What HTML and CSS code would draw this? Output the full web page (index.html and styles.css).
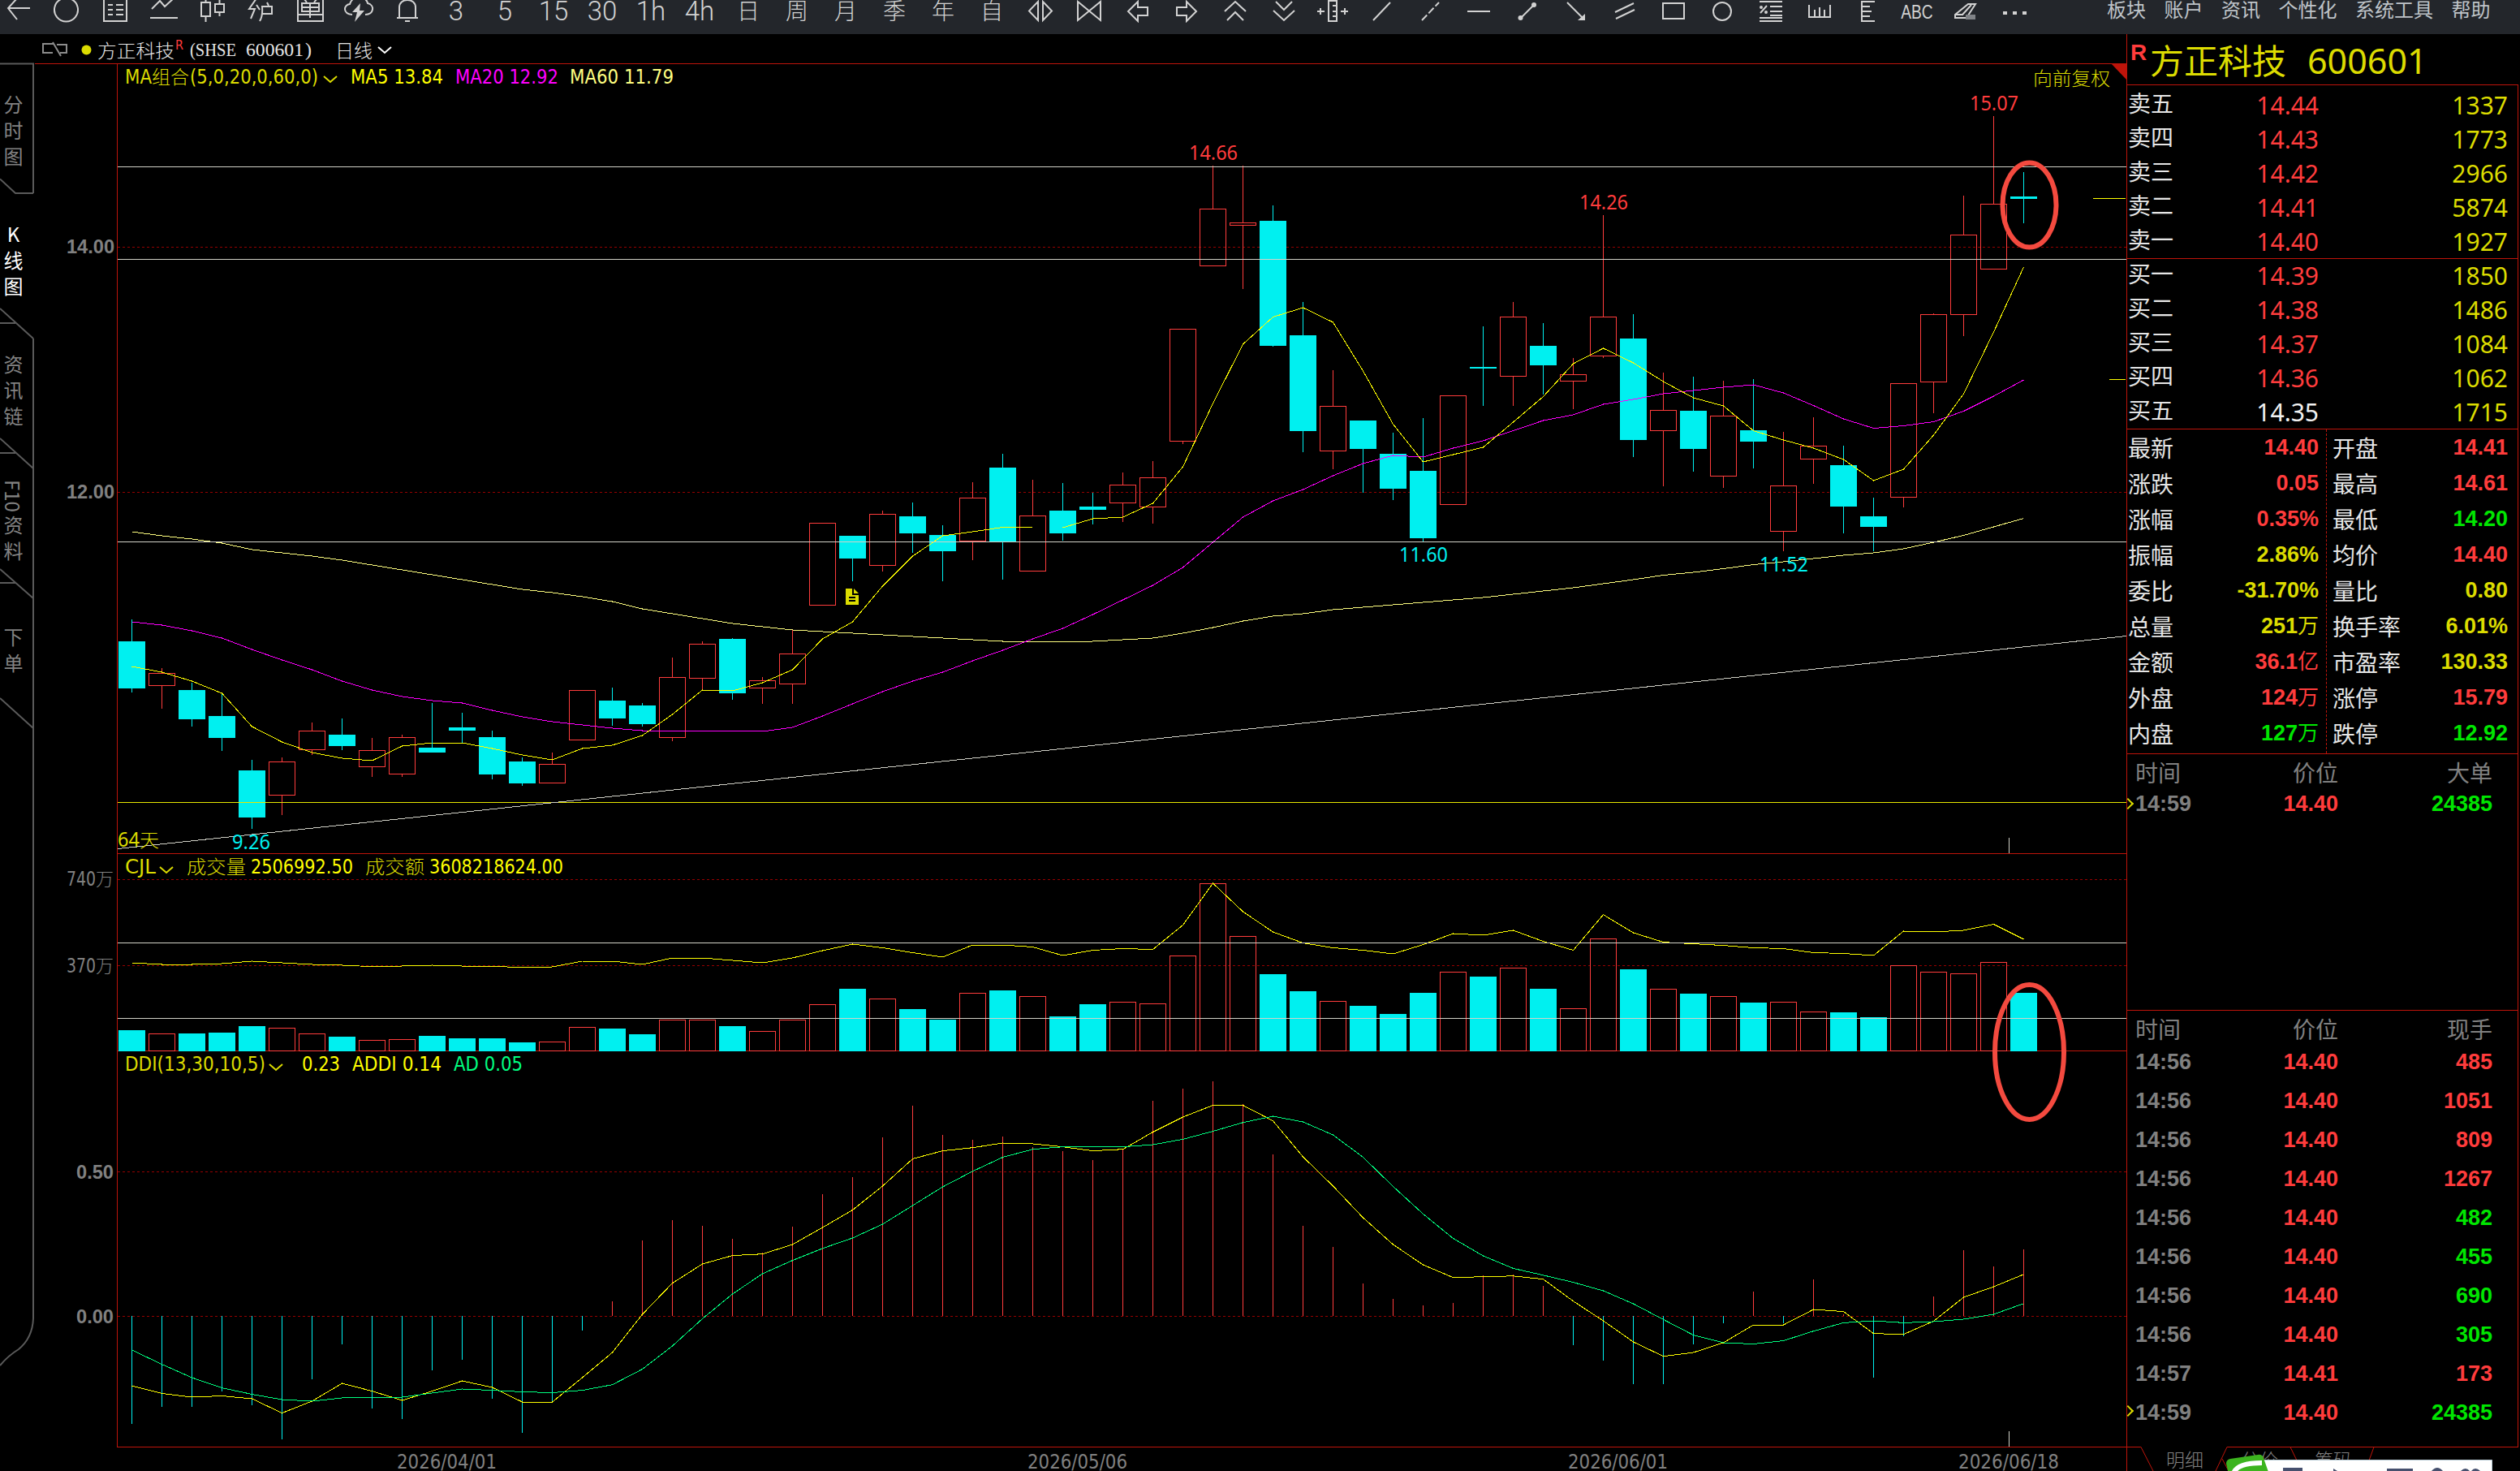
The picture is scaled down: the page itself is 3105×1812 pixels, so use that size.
FILE: index.html
```html
<!DOCTYPE html>
<html lang="zh-CN">
<head>
    <meta charset="UTF-8">
    <title>方正科技 600601</title>
    <link rel="stylesheet" href="styles.css">
</head>
<body>
    <header class="topbar">
        <div class="tools">
            <svg viewBox="-30 0 60 28"><path d="M15 10H-12M-1 -2L-12 10L-1 24"/></svg>
            <svg viewBox="-30 0 60 28"><path d="M6 -1A14.5 14.5 0 1 1 -7 -1"/></svg>
            <svg viewBox="-30 0 60 28"><path d="M-14 -2V26H14V-2M-9 6H-3M1 6H10M-9 12H-3M1 12H10M-9 18H-3M1 18H10"/></svg>
            <svg viewBox="-30 0 60 28"><path d="M-15 11L-5 1L1 8L13 -3M-17 22H17"/></svg>
            <svg viewBox="-30 0 60 28"><path d="M-14 3H-3V20H-14ZM-8.500 -2V3M-8.500 20V27M3 5H14V15H3ZM8.500 -1V5M8.500 15V20"/></svg>
            <svg viewBox="-30 0 60 28"><path d="M-6 -2L-15 11H-8L-13 23M-6 6L-2 12M-2 26Q2 20 1 8H13V17H1M7 3L9 7"/></svg>
            <svg viewBox="-30 0 60 28"><path d="M-15 -2V26H16V-2M-10 4H11V14H-10ZM-10 9H11M0 4V22M-15 18H16M-7 -1L-4 3M8 -1L5 3"/></svg>
            <svg viewBox="-30 0 60 28"><path d="M-8 18C-20 17 -19 6 -11 5C-8 -6 9 -6 11 4C20 6 19 18 8 18"/><path class="solid" d="M2 4L-8 15H-2L-5 27L7 13H1Z"/></svg>
            <svg viewBox="-30 0 60 28"><path d="M-13 22H13M-10 22V9C-10 -3 10 -3 10 9V22M-3 26H3"/></svg>
            <span>3</span><span>5</span><span>15</span><span>30</span><span>1h</span><span>4h</span>
            <span class="han">日</span><span class="han">周</span><span class="han">月</span><span class="han">季</span><span class="han">年</span><span class="han">自</span>
            <svg viewBox="-30 0 60 28"><path d="M-3 2V25L-14 13.500ZM3 2V25L14 13.500Z"/></svg>
            <svg viewBox="-30 0 60 28"><path d="M-14 2V25L0 13.500ZM14 2V25L0 13.500Z"/></svg>
            <svg viewBox="-30 0 60 28"><path d="M-12 14L0 2V9H12V19H0V26Z"/></svg>
            <svg viewBox="-30 0 60 28"><path d="M12 14L0 2V9H-12V19H0V26Z"/></svg>
            <svg viewBox="-30 0 60 28"><path d="M-13 14L0 2L13 14M-10 25L0 15L10 25"/></svg>
            <svg viewBox="-30 0 60 28"><path d="M-13 13L0 25L13 13M-10 2L0 12L10 2"/></svg>
            <svg viewBox="-30 0 60 28"><path d="M-5 1H5V26H-5ZM0 7H5M0 14H5M0 20H5M-19 14H-10M10 14H19M-15 10V18M15 10V18"/></svg>
            <svg viewBox="-30 0 60 28"><path d="M-10 25L11 3"/></svg>
            <svg viewBox="-30 0 60 28"><path stroke-dasharray="9 3" d="M-10 25L11 3"/></svg>
            <svg viewBox="-30 0 60 28"><path d="M-14 14H14"/></svg>
            <svg viewBox="-30 0 60 28"><path d="M-9 23L9 5"/><circle class="solid" cx="-8.500" cy="22" r="3"/><circle class="solid" cx="8" cy="6" r="3"/></svg>
            <svg viewBox="-30 0 60 28"><path d="M-11 3L9 23"/><path class="solid" d="M11 17V25H2Z"/></svg>
            <svg viewBox="-30 0 60 28"><path d="M-12 15L11 4M-11 23L12 12"/></svg>
            <svg viewBox="-30 0 60 28"><path d="M-13 4H13V23H-13Z"/></svg>
            <svg viewBox="-30 0 60 28"><circle cx="0" cy="14" r="11"/></svg>
            <svg viewBox="-30 0 60 28"><path d="M-14 2H14M-1 8H14M-1 14H14M-1 19H14M-14 22H14M-14 26H14M-13 16L-5 7"/><circle cx="-12" cy="9" r="1"/><circle cx="-6" cy="15" r="1"/></svg>
            <svg viewBox="-30 0 60 28"><path d="M-13 6V21H13V6M-6 12V21M0 9V21M6 12V21"/></svg>
            <svg viewBox="-30 0 60 28"><path d="M8 2H-8V26H8M-8 8H2M-8 14H4M-8 20H2"/></svg>
            <span class="abc">ABC</span>
            <svg viewBox="-30 0 60 28"><path d="M-13 18L3 5H12L1 22H-13ZM-4 18L7 6M-13 18H-3"/><path class="shade" d="M0 18H12V24H0Z"/></svg>
            <svg viewBox="-30 0 60 28"><path class="solid" d="M-14 14H-9V18H-14ZM-2 14H3V18H-2ZM10 14H15V18H10Z"/></svg>
        </div>
        <nav class="menu"><a>板块</a><a>账户</a><a>资讯</a><a>个性化</a><a>系统工具</a><a>帮助</a></nav>
    </header>

    <main class="main">
        <aside class="side">
            <svg class="side-lines" width="43" height="1770" viewBox="0 42 43 1770">
                <path d="M0 78.500H41V238M0 220.500L19 238H41M0 380L41 417M0 398H19M0 540L41 577M0 558H19M0 701L41 737M0 718H19M0 860L41 897M41 417V1624Q40 1648 23 1662Q10 1670 0 1682"/>
            </svg>
            <div class="tab">分时图</div>
            <div class="tab active">K线图</div>
            <div class="tab">资讯链</div>
            <div class="tab mixed"><span>F10</span>资料</div>
            <div class="tab">下单</div>
        </aside>

        <svg class="chart" id="chart" width="2577" height="1770" viewBox="43 42 2577 1770"></svg>

        <section class="quote">
            <h1 class="title"><sup>R</sup><b>方正科技</b><i>600601</i></h1>
            <div class="book sell">
                <div><b>卖五</b><span class="up">14.44</span><em>1337</em></div>
                <div><b>卖四</b><span class="up">14.43</span><em>1773</em></div>
                <div><b>卖三</b><span class="up">14.42</span><em>2966</em></div>
                <div><b>卖二</b><span class="up">14.41</span><em>5874</em></div>
                <div><b>卖一</b><span class="up">14.40</span><em>1927</em></div>
            </div>
            <div class="book buy">
                <div><b>买一</b><span class="up">14.39</span><em>1850</em></div>
                <div><b>买二</b><span class="up">14.38</span><em>1486</em></div>
                <div><b>买三</b><span class="up">14.37</span><em>1084</em></div>
                <div><b>买四</b><span class="up">14.36</span><em>1062</em></div>
                <div><b>买五</b><span class="flat">14.35</span><em>1715</em></div>
            </div>
            <div class="stats">
                <div class="col">
                    <div><b>最新</b><span class="up">14.40</span></div>
                    <div><b>涨跌</b><span class="up">0.05</span></div>
                    <div><b>涨幅</b><span class="up">0.35%</span></div>
                    <div><b>振幅</b><span class="amt">2.86%</span></div>
                    <div><b>委比</b><span class="amt">-31.70%</span></div>
                    <div><b>总量</b><span class="amt">251<small>万</small></span></div>
                    <div><b>金额</b><span class="up">36.1<small>亿</small></span></div>
                    <div><b>外盘</b><span class="up">124<small>万</small></span></div>
                    <div><b>内盘</b><span class="down">127<small>万</small></span></div>
                </div>
                <div class="col">
                    <div><b>开盘</b><span class="up">14.41</span></div>
                    <div><b>最高</b><span class="up">14.61</span></div>
                    <div><b>最低</b><span class="down">14.20</span></div>
                    <div><b>均价</b><span class="up">14.40</span></div>
                    <div><b>量比</b><span class="amt">0.80</span></div>
                    <div><b>换手率</b><span class="amt">6.01%</span></div>
                    <div><b>市盈率</b><span class="amt">130.33</span></div>
                    <div><b>涨停</b><span class="up">15.79</span></div>
                    <div><b>跌停</b><span class="down">12.92</span></div>
                </div>
            </div>
            <div class="ticks big">
                <div class="head"><b>时间</b><b>价位</b><b>大单</b></div>
                <div class="cur"><span>14:59</span><span class="up">14.40</span><span class="down">24385</span></div>
            </div>
            <div class="ticks">
                <div class="head"><b>时间</b><b>价位</b><b>现手</b></div>
                <div><span>14:56</span><span class="up">14.40</span><span class="up">485</span></div>
                <div><span>14:56</span><span class="up">14.40</span><span class="up">1051</span></div>
                <div><span>14:56</span><span class="up">14.40</span><span class="up">809</span></div>
                <div><span>14:56</span><span class="up">14.40</span><span class="up">1267</span></div>
                <div><span>14:56</span><span class="up">14.40</span><span class="down">482</span></div>
                <div><span>14:56</span><span class="up">14.40</span><span class="down">455</span></div>
                <div><span>14:56</span><span class="up">14.40</span><span class="down">690</span></div>
                <div><span>14:56</span><span class="up">14.40</span><span class="down">305</span></div>
                <div><span>14:57</span><span class="up">14.41</span><span class="up">173</span></div>
                <div class="cur"><span>14:59</span><span class="up">14.40</span><span class="down">24385</span></div>
            </div>
            <svg class="foot" width="485" height="30" viewBox="2620 1782 485 30">
                <path class="edge" d="M2620 1782.500H2638L2653 1812M2730 1812L2744 1782.500H3103M2738 1797L2746 1812M2822 1782.500L2830 1799M2925 1782.500L2919 1799"/>
                <text x="2669" y="1807">明细</text>
                <text x="2761" y="1807">分价</text>
                <text x="2852" y="1807">筹码</text>
                <!-- input method bar peeking in from below -->
                <path class="ime" d="M2785 1798.500H3070.500V1814H2785Z"/>
                <path class="ime-ink" d="M2813 1808H2837V1812H2813ZM2875 1809L2880 1812H2875ZM2941 1809H2973V1812H2941ZM2996 1812Q3003 1804 3010 1812ZM3032 1812Q3038 1806 3043 1812ZM3045 1812Q3050 1806 3056 1812Z"/>
                <path class="ime-logo" d="M2743 1803Q2743 1798 2748 1797L2782 1792Q2787 1791 2789 1796L2796 1816H2746Z"/>
                <path class="ime-s" d="M2752 1815Q2756 1802 2787 1802"/>
            </svg>
        </section>
    </main>
    <script src="chart.js"></script>
</body>
</html>
```

FILE: styles.css
```css
body {
    margin: 0;
    width: 3105px;
    height: 1812px;
    overflow: hidden;
    background: #000;
    color: #e6e6e6;
    font-family: "Noto Sans", "Noto Sans CJK SC", sans-serif;
}
b, i, em, h1 {
    font-weight: normal;
    font-style: normal;
}

/* top bar */
.topbar {
    display: flex;
    height: 42px;
    background: #23262b;
}
.tools {
    display: flex;
    margin-left: -8px;
    width: 2604px;
    height: 28px;
    color: #d2d2d2;
}
.tools svg {
    width: 60px;
    height: 28px;
    flex: none;
    fill: none;
    stroke: #d2d2d2;
    stroke-width: 2;
}
.tools .solid {
    fill: #d2d2d2;
    stroke: none;
}
.tools .shade {
    fill: #808387;
    stroke: none;
}
.tools span {
    width: 60px;
    flex: none;
    text-align: center;
    font: 300 33px/27px Roboto, sans-serif;
}
.tools .han {
    font: 300 28px/24px "Noto Sans CJK SC", sans-serif;
}
.tools .abc {
    font: 24px/30px "Liberation Sans", sans-serif;
    transform: scaleX(.8);
}
.menu {
    display: flex;
    gap: 22.500px;
    font: 24px/21px "Noto Sans CJK SC", sans-serif;
    color: #bec3c8;
}

.main {
    display: flex;
    height: 1770px;
}

/* left tabs */
.side {
    position: relative;
    width: 43px;
    padding-top: 43px;
    box-sizing: border-box;
    color: #828282;
}
.side-lines {
    position: absolute;
    left: 0;
    top: 0;
    fill: none;
    stroke: #5a5a5a;
    stroke-width: 2;
}
.tab {
    height: 160px;
    width: 33px;
    display: flex;
    align-items: center;
    justify-content: center;
    writing-mode: vertical-rl;
    text-orientation: upright;
    font: 24px/33px "Noto Sans CJK SC", sans-serif;
    letter-spacing: 8px;
}
.tab.mixed {
    text-orientation: mixed;
}
.tab.mixed span {
    letter-spacing: 0;
    margin-bottom: 4px;
}
.tab.active {
    color: #fff;
}

/* chart */
.chart {
    display: block;
    flex: none;
}
.chart line, .chart rect, .chart polyline, .chart .frame {
    shape-rendering: crispEdges;
    stroke-width: 1;
}
.chart polyline, .chart .frame {
    fill: none;
}
.frame { stroke: #be140a; }
.chart .grid {
    stroke: #960000;
    stroke-dasharray: 3 3;
}
.chart .guide { stroke: #d2d2c8; }
.chart .base { stroke: #e6e600; }
.up-bar { stroke: #ff3c3c; fill: none; }
.down-bar { stroke: #00f0f0; fill: #00f0f0; }
.c-yellow { stroke: #ffff00; }
.c-magenta { stroke: #ff00ff; }
.c-pale { stroke: #ffff80; }
.c-green { stroke: #00ff80; }
.chart .mark {
    fill: none;
    stroke: #f44a3f;
    stroke-width: 6;
}
.chart .thin { fill: none; stroke-width: 2; }
.chart text {
    font-family: "DejaVu Sans Condensed", "DejaVu Sans", "Noto Sans CJK SC", sans-serif;
    font-size: 24px;
}
.chart text.axis {
    font-family: "Liberation Sans", sans-serif;
    font-weight: bold;
    font-size: 23px;
    fill: #808080;
}
.chart text.tag {
    font-family: "Noto Sans", sans-serif;
    font-size: 25px;
}
.chart text.han {
    font-family: "Noto Sans CJK SC", sans-serif;
    font-size: 23px;
    font-weight: 300;
}
.chart text.code {
    font-family: "Liberation Serif", serif;
    font-size: 24px;
}

/* quote panel */
.quote {
    width: 483px;
    height: 1770px;
    box-sizing: border-box;
    display: flex;
    flex-direction: column;
    border-left: 1px solid #be140a;
}
.quote .title {
    display: flex;
    height: 62px;
    margin: 0;
    box-sizing: border-box;
    color: #dcdc00;
    font-size: 42px;
    line-height: 65px;
}
.title sup {
    width: 28px;
    padding-left: 4px;
    box-sizing: border-box;
    color: #ff3c3c;
    font: bold 28px/46px "Liberation Sans", sans-serif;
}
.title b {
    width: 194px;
}
.title i {
    font-size: 43px;
}
.up { color: #ff3c3c; }
.down { color: #00e600; }
.amt { color: #dcdc00; }
.flat { color: #f0f0f0; }
.book, .stats, .ticks {
    border-top: 1px solid #be140a;
    border-right: 1px solid #be140a;
    box-sizing: border-box;
}
.book {
    height: 210px;
    padding-right: 12px;
    font-size: 30px;
}
.book.sell {
    height: 214px;
    padding-top: 4px;
}
.book div {
    display: grid;
    grid-template-columns: 60px 176px 1fr;
    height: 42px;
    line-height: 42px;
    text-align: right;
}
.book b {
    padding-left: 1px;
    text-align: left;
    font-size: 28px;
    line-height: 36px;
}
.book em { color: #dcdc00; }
.stats {
    display: flex;
    height: 400px;
}
.stats .col {
    width: 246px;
    padding-right: 9px;
    box-sizing: border-box;
    border-right: 1px dashed #be140a;
}
.stats .col + .col {
    width: auto;
    flex: 1;
    padding: 0 12px 0 6px;
    border: 0;
}
.stats .col div {
    display: flex;
    justify-content: space-between;
    height: 44px;
    line-height: 44px;
    padding-left: 1px;
}
.stats b, .ticks b {
    font: 28px/44px "Noto Sans CJK SC", sans-serif;
}
.stats span, .ticks span {
    font-family: "Liberation Sans", "Noto Sans CJK SC", sans-serif;
    font-weight: bold;
    font-size: 27px;
}
.stats small {
    font-size: 26px;
    font-weight: normal;
}
.ticks {
    flex: 1;
    padding-right: 31px;
    color: #808080;
}
.ticks.big {
    flex: none;
    height: 316px;
}
.ticks div {
    display: grid;
    grid-template-columns: 130px 120px 1fr;
    height: 48px;
    line-height: 48px;
    padding-left: 10px;
    text-align: right;
    position: relative;
}
.ticks div > :first-child {
    text-align: left;
}
.ticks .head {
    height: 39px;
}
.ticks.big .cur {
    height: 42px;
    line-height: 44px;
}
.ticks .cur::before {
    content: "";
    position: absolute;
    left: -4px;
    top: 17px;
    width: 10px;
    height: 10px;
    box-sizing: border-box;
    border: solid #dcdc00;
    border-width: 2px 2px 0 0;
    transform: rotate(45deg);
}
.foot {
    display: block;
    margin-left: -1px;
}
.foot text {
    font: 300 23px "Noto Sans CJK SC", sans-serif;
    fill: #808080;
}
.edge { fill: none; stroke: #be140a; }
.ime { fill: #fff; stroke: #b4c8d2; }
.ime-ink { fill: #46506e; }
.ime-logo { fill: #3cb41e; }
.ime-s {
    fill: none;
    stroke: #fff;
    stroke-width: 6;
}
```

FILE: chart.js
```js
// pixel x of each trading day
const X = i => 162.5 + i * 37;
const svg = document.getElementById('chart');
let out = '';

function line(x1, y1, x2, y2, cls) {
    out += `<line x1="${x1}" y1="${y1}" x2="${x2}" y2="${y2}" class="${cls}"/>`;
}
function text(s, x, y, w, color, cls = '') {
    out += `<text x="${x}" y="${y}" textLength="${w}" lengthAdjust="spacingAndGlyphs" fill="${color}" class="${cls}">${s}</text>`;
}
function curve(ys, cls) {
    out += `<polyline class="${cls}" points="${ys.map((y, i) => X(i) + ',' + y).join(' ')}"/>`;
}
function box(i, top, bottom, up) {
    out += `<rect x="${X(i) - 16}" y="${Math.floor(top) + .5}" width="32" height="${Math.max(1, Math.round(bottom - top - 1))}" class="${up ? 'up-bar' : 'down-bar'}"/>`;
}
function chevron(x, y, color) {
    out += `<path class="thin" stroke="${color}" d="M${x} ${y}l8 7l8 -7"/>`;
}

// [up, high, top, bottom, low]
const candles = [
    [0,763,790,848,853],[1,823,829,845,873],[0,841,850,886,895],[0,855,882,909,925],
    [0,936,949,1007,1021],[1,933,938,980,1004],[1,890,900,924,930],[0,885,905,919,924],
    [1,909,924,945,957],[1,905,908,954,957],[0,866,921,927,927],[0,878,896,900,915],
    [0,900,908,954,960],[0,933,938,965,968],[1,927,941,965,965],[1,850,850,912,912],
    [0,847,863,885,894],[0,866,869,892,895],[1,810,834,909,913],[1,790,793,836,850],
    [0,786,787,854,862],[1,834,838,848,867],[1,775,805,843,867],[1,644,644,746,746],
    [0,660,660,688,716],[1,629,633,697,704],[0,619,636,657,681],[0,647,659,679,716],
    [1,594,613,667,690],[0,559,576,667,714],[1,591,635,704,704],[0,595,629,657,666],
    [0,607,624,628,646],[1,582,597,620,643],[1,568,588,625,645],[1,405,405,544,547],
    [1,204,257,328,328],[1,204,274,278,356],[0,253,272,426,427],[0,372,413,531,557],
    [1,456,500,556,578],[0,518,518,553,607],[0,533,559,602,616],[0,515,580,663,667],
    [1,487,487,622,622],[0,402,452,454,500],[1,372,390,464,500],[0,398,426,450,486],
    [1,441,461,470,504],[1,265,390,439,441],[0,387,417,542,563],[1,459,505,531,599],
    [0,464,506,553,581],[1,469,512,587,601],[0,467,530,544,577],[1,532,598,655,679],
    [1,514,549,566,596],[0,549,573,624,657],[0,613,636,649,679],[1,472,472,613,625],
    [1,386,387,471,509],[1,241,289,388,414],[1,143,251,332,332],[0,212,242,245,275]
];
const ma5 = [821,828,839,854,895,914,927,934,937,919,915,915,922,930,936,922,918,906,880,850,851,841,825,787,766,722,685,660,655,649.5,650,650,639,637,620,575,497,424,390.5,379,397,457,522.5,569,560,551,520,488.5,448,429,447,470,490,500,530.6,542,552,566,592,578,536,485,409,329];
const ma20 = [766,770,777,786,800,813,825,839,850,858,863,866,875,883,889,893,897,900,900,900,900,901,896,882,867,852,839,828,814,801,787,774,757,739,721,699,668,637,617,603,586,571,561,563,552,543,530.6,518,511,498,492,485,481,477,474,484,499.6,516,527.5,524.5,519.5,506.5,488,468];
const ma60 = [655,660,664,669,677,681,685,690,696,702,708,714,720,726,730,735,741,750,756,762,768,772,776,778,780,782,784,786,788,790,790,791,790,788,786,780,773,765,759,756,751,748,745,742,739,736,732,728,724,719,714,708.5,705,700.5,695.5,692,688,684,681,676,668,659.5,649,638.5];
const volTop = [1269,1273,1273,1272,1264,1266,1273,1277,1281,1280,1276,1279,1279,1284,1283,1265,1267,1274,1256,1256,1264,1270,1256,1237,1218,1230,1243,1256,1223,1220,1227,1252,1237,1234,1236,1177,1088,1153,1200,1221,1233,1239,1249,1223,1197,1203,1192,1218,1242,1156,1194,1218,1224,1227,1235,1234,1246,1247,1253,1189,1197,1199,1185,1223];
const volMa = [1186,1188,1188,1187,1184,1186,1188,1189,1190.7,1190,1189,1190,1190,1192,1191,1184,1184,1188,1180,1180,1183,1186,1180,1171,1163,1167.5,1173.5,1179,1164,1164,1166.5,1177,1170.5,1168.5,1169.5,1139.5,1088,1123,1148,1161.6,1167.5,1170.5,1175,1163.6,1150,1152,1146,1159.6,1170.5,1126.7,1149,1160.6,1162.6,1164.6,1167.5,1168.5,1173.5,1174.5,1177,1147,1148,1146,1138.5,1157];
const ddi = [1754,1733,1733,1714,1731,1773,1699,1656,1735,1748,1688,1675,1723,1765,1727,1639,1603,1528,1503,1510,1526,1543,1511,1471,1450,1401,1362,1398,1404,1400,1413,1418,1429,1415,1356,1341,1332,1360,1422,1510,1536,1581,1600,1608,1605,1571,1570,1584,1657,1676,1705,1705,1656,1630,1591,1630,1576,1619,1697,1646,1597,1540,1560,1539];
const addi = [1707,1716.5,1721,1719.5,1723,1740.6,1726,1704,1713.6,1725,1713.6,1701,1709,1727,1727,1697,1666,1619,1580.6,1557,1546.6,1544.7,1533,1512,1490.5,1461,1427.5,1417.6,1413.7,1408,1409,1412.7,1417.6,1415.7,1394.5,1376,1361.5,1361.5,1380.7,1425,1461,1500,1533,1558,1573.7,1572.7,1571.8,1575.7,1602.8,1627,1653,1670.7,1666,1654,1632,1632,1613,1615.6,1642.7,1643.6,1627.4,1598,1585,1569.8];
const ad = [1663,1680.6,1697,1709.6,1717.5,1724,1726,1722,1721,1721,1716,1711,1712.6,1714.5,1715.5,1712.6,1705.7,1686.5,1658,1624.4,1594,1569,1552.6,1537.8,1525,1508,1485,1462,1442.8,1425.5,1415.7,1412.7,1412.7,1412.7,1410,1403.4,1393.5,1382.7,1375,1382,1398,1425.5,1461.5,1495.4,1525.5,1547,1562.4,1570.8,1579.6,1590,1606,1625.4,1644.6,1654,1655.5,1651.5,1639.7,1629.4,1627,1629.4,1628,1625,1619,1605.7];

// grid
[304.5, 606.5, 1083.5, 1189.5, 1443.5, 1621.5].forEach(y => line(145, y, 2620, y, 'grid'));
out += '<path class="frame" d="M43 78.5H2620M144.5 78V1782M144 1051.5H2620M144 1294.5H2620M144 1782.5H2620"/>';
out += '<path fill="#be140a" d="M2601 78H2620V98Z"/>';

// candles
candles.forEach(([up, hi, top, bot, lo], i) => {
    const cls = up ? 'up-bar' : 'down-bar';
    if (hi < top) line(X(i), hi, X(i), top, cls);
    if (lo > bot) line(X(i), bot, X(i), lo, cls);
    box(i, top, bot, up);
});
curve(ma60, 'c-pale');
curve(ma20, 'c-magenta');
curve(ma5, 'c-yellow');

// volume
volTop.forEach((y, i) => box(i, y, 1295, candles[i][0]));
curve(volMa, 'c-yellow');

// DDI
ddi.forEach((y, i) => line(X(i), 1621, X(i), y, y < 1621 ? 'up-bar' : 'down-bar'));
curve(addi, 'c-yellow');
curve(ad, 'c-green');

// drawn guide lines
[205.5, 319.5, 667.5, 1161.5, 1254.5].forEach(y => line(145, y, 2620, y, 'guide'));
line(145, 988.5, 2620, 988.5, 'base');
out += '<polyline class="guide" points="145,1045.5 2620,783.5"/>';
line(2579, 244.5, 2619, 244.5, 'c-yellow');
line(2599, 467.5, 2619, 467.5, 'c-yellow');
line(2475.5, 1032, 2475.5, 1051, 'guide');
line(2475.5, 1763, 2475.5, 1782, 'guide');
out += '<ellipse class="mark" cx="2500.5" cy="252.500" rx="33" ry="52"/><ellipse class="mark" cx="2500.500" cy="1296" rx="42.500" ry="83"/>';
out += '<path fill="#dcdc00" fill-rule="evenodd" d="M1042 725h8v8h8v12h-16zM1052 725l6 6h-6zM1046 735v2h8v-2zM1046 739v2h8v-2z"/>';

// stock title
out += '<path class="thin" stroke="#8c8c8c" d="M66 54H53V65H65M70 55H82V65H74M65 52L75 69"/>';
out += '<circle cx="106.500" cy="61.500" r="6" fill="#dcdc00"/>';
text('方正科技', 120, 71, 95, '#e6e6e6', 'han');
out += '<text x="216" y="61" fill="#ff3c3c" style="font-size:16px">R</text>';
text('(SHSE', 234, 69, 57, '#e6e6e6', 'code');
text('600601', 303, 69, 71, '#e6e6e6', 'code');
text(')', 376, 69, 8, '#e6e6e6', 'code');
text('日线', 413, 71, 46, '#e6e6e6', 'han');
chevron(466, 58, '#fff');

// legends
const Y = '#ffff00', L = '#dcdc00', R = '#ff3c3c', C = '#00f0f0', G = '#808080';
text('MA', 154, 103, 33, L);
text('组合', 187, 103, 46, L, 'han');
text('(5,0,20,0,60,0)', 234, 103, 158, L);
chevron(399, 94, L);
text('MA5 13.84', 432, 103, 114, Y);
text('MA20 12.92', 561, 103, 127, '#ff00ff');
text('MA60 11.79', 702, 103, 128, '#ffff80');
text('向前复权', 2505, 105, 95, L, 'han');
text('CJL', 154, 1076, 38, L);
chevron(197, 1068, L);
text('成交量', 230, 1076, 73, L, 'han');
text('2506992.50', 309, 1076, 126, Y);
text('成交额', 450, 1076, 73, L, 'han');
text('3608218624.00', 529, 1076, 165, Y);
text('DDI(13,30,10,5)', 154, 1319, 173, L);
chevron(332, 1311, L);
text('0.23', 372, 1319, 47, Y);
text('ADDI 0.14', 434, 1319, 110, Y);
text('AD 0.05', 559, 1319, 85, '#00ff80');

// axes
text('14.00', 82, 312, 59, G, 'axis');
text('12.00', 82, 614, 59, G, 'axis');
text('740', 82, 1091, 36, G);
text('万', 118, 1091, 22, G, 'han');
text('370', 82, 1198, 36, G);
text('万', 118, 1198, 22, G, 'han');
text('0.50', 94, 1452, 46, G, 'axis');
text('0.00', 94, 1630, 46, G, 'axis');
text('2026/04/01', 489, 1809, 123, G);
text('2026/05/06', 1266, 1809, 123, G);
text('2026/06/01', 1932, 1809, 123, G);
text('2026/06/18', 2413, 1809, 124, G);

// price tags
text('14.66', 1465, 197, 60, R, 'tag');
text('14.26', 1946, 258, 60, R, 'tag');
text('15.07', 2427, 136, 60, R, 'tag');
text('11.60', 1724, 692, 60, C, 'tag');
text('11.52', 2168, 704, 60, C, 'tag');
text('9.26', 286, 1046, 47, C, 'tag');
text('64', 145, 1043, 27, L, 'tag');
text('天', 172, 1043, 24, L, 'han');

svg.innerHTML = out;
```
